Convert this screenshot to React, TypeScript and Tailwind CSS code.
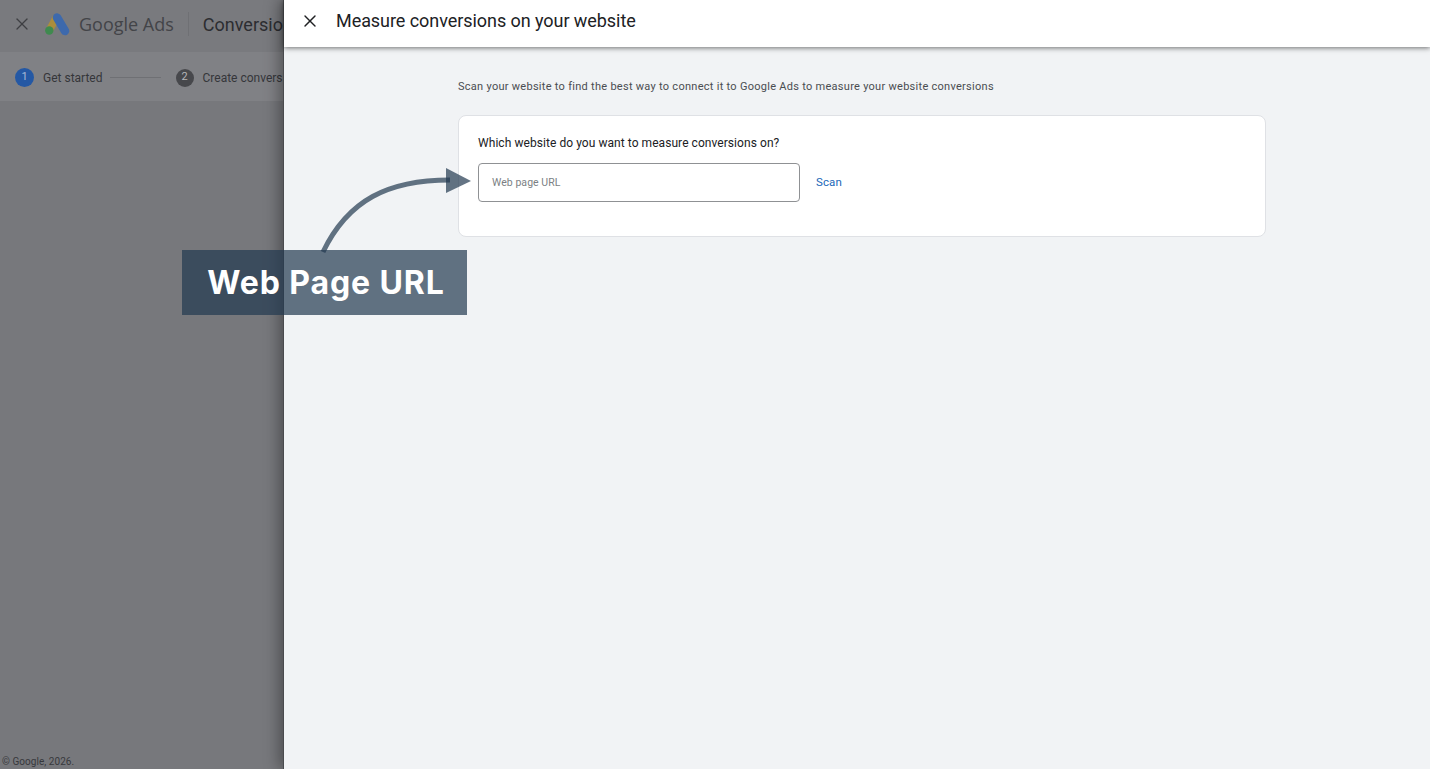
import { X } from 'lucide-react'

function AdsLogo() {
    return (
        <svg width="25" height="23" viewBox="0 0 25 23" className="shrink-0">
            <path d="M4.5 17 L11 5" stroke="#ab8d3c" strokeWidth="7.5" strokeLinecap="round" />
            <path d="M12 4.5 L20 18" stroke="#3d69ac" strokeWidth="8.5" strokeLinecap="round" />
            <circle cx="4.3" cy="17.5" r="4.2" fill="#3f8a4f" />
        </svg>
    )
}

function Step({ n, label, active }: { n: number; label: string; active?: boolean }) {
    return (
        <div className="flex items-center shrink-0">
            <div
                className={
                    active
                        ? 'w-[19px] h-[19px] rounded-full bg-[#2458a4] text-[#a9bcd8] text-[11px] flex items-center justify-center'
                        : 'w-[18px] h-[18px] rounded-full bg-[#47484c] text-[#b5b6b8] text-[11px] flex items-center justify-center'
                }
            >
                {n}
            </div>
            <span className="ml-[9px] text-[12px] text-[#35363a] whitespace-nowrap">{label}</span>
        </div>
    )
}

function LeftPage() {
    return (
        <div className="w-[283px] shrink-0 h-full overflow-hidden flex flex-col bg-[#77787c]">
            <div className="h-[52px] shrink-0 flex items-center bg-[#797a7e] pl-[12px] pb-[4px]">
                <X size={20} strokeWidth={1.5} className="text-[#3e3f43] shrink-0" />
                <div className="ml-[13px] flex">
                    <AdsLogo />
                </div>
                <span className="ml-[9px] text-[18px] text-[#434448] whitespace-nowrap font-['Open_Sans',sans-serif]">
                    Google Ads
                </span>
                <div className="ml-[14px] w-px h-[24px] bg-[#6f7074] shrink-0" />
                <span className="ml-[14px] text-[18px] text-[#2c2d31] whitespace-nowrap">Conversions</span>
            </div>
            <div className="h-[49px] shrink-0 flex items-center bg-[#808185] pl-[15px] pt-[2px]">
                <Step n={1} label="Get started" active />
                <div className="ml-[7px] w-[51px] h-px bg-[#6f7074] shrink-0" />
                <div className="ml-[15px]">
                    <Step n={2} label="Create conversions" />
                </div>
            </div>
            <div className="flex-1 flex items-end pl-[2px]">
                <span className="text-[10px] text-[#37383c] tracking-[0.05px]">© Google, 2026.</span>
            </div>
        </div>
    )
}

function Panel() {
    return (
        <div className="flex-1 h-full flex flex-col bg-[#f1f3f5] shadow-[-4px_0_14px_rgba(0,0,0,0.35)] border-l border-[#4a4b4e] z-10">
            <div className="h-[47px] shrink-0 bg-white flex items-center pl-[16px] pb-[6px] shadow-[0_1px_5px_rgba(0,0,0,0.55)]">
                <X size={20} strokeWidth={1.7} className="text-[#202124]" />
                <span className="ml-[16px] text-[18px] text-[#202124] tracking-[-0.06px]">
                    Measure conversions on your website
                </span>
            </div>
            <div className="ml-[174px] mr-[164px] pt-[32px]">
                <p className="text-[11px] leading-[16px] text-[#4a4d51] tracking-[0.28px]">
                    Scan your website to find the best way to connect it to Google Ads to measure your website conversions
                </p>
                <div className="mt-[20px] h-[122px] bg-white rounded-[8px] border border-[#dfe1e5] pl-[19px] pt-[19px]">
                    <p className="text-[12px] leading-[16px] text-[#202124] tracking-[0.06px]">
                        Which website do you want to measure conversions on?
                    </p>
                    <div className="mt-[12px] flex items-center">
                        <div className="w-[322px] h-[39px] rounded-[4px] border border-[#8f9194] flex items-center pl-[13px]">
                            <span className="text-[10.5px] text-[#7b7f84] tracking-[0.05px]">Web page URL</span>
                        </div>
                        <span className="ml-[16px] text-[11.5px] text-[#1a67b8] tracking-[0.1px]">Scan</span>
                    </div>
                </div>
            </div>
        </div>
    )
}

export default function App() {
    return (
        <div className="relative w-[1430px] h-[769px] overflow-hidden flex font-['Roboto',sans-serif]">
            <LeftPage />
            <Panel />
            <svg width="160" height="100" viewBox="0 0 160 100" className="absolute left-[318px] top-[160px] z-20">
                <path d="M5 92 C 30 40, 70 20, 132 20" fill="none" stroke="rgba(34,57,80,0.7)" strokeWidth="5" />
                <polygon points="128,8 128,33 153,21" fill="rgba(34,57,80,0.7)" />
            </svg>
            <div className="absolute left-[182px] top-[250px] w-[285px] h-[65px] z-20 bg-[rgba(34,57,80,0.7)] flex items-center justify-center pl-[3px] pt-[1px]">
                <span className="text-white text-[32px] font-bold tracking-[0.9px] font-['Inter',sans-serif]">Web Page URL</span>
            </div>
        </div>
    )
}
